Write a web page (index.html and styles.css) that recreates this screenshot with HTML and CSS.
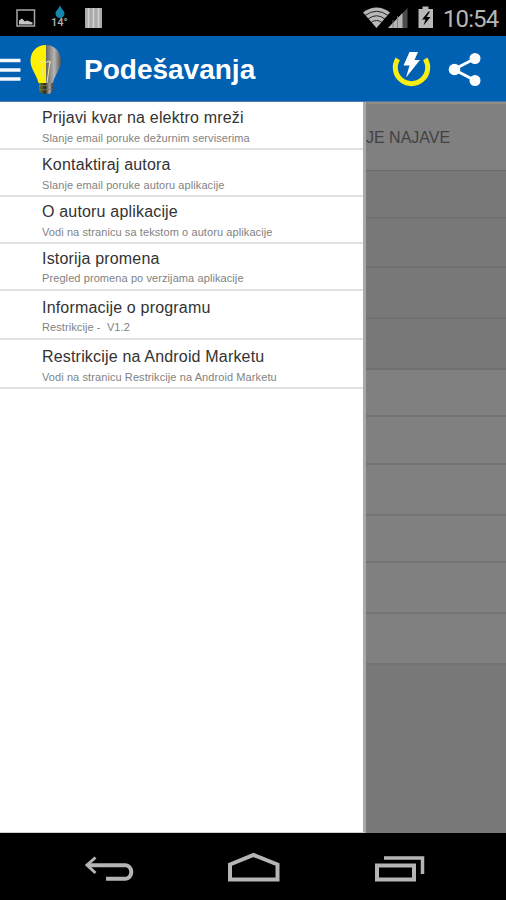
FILE: index.html
```html
<!DOCTYPE html>
<html lang="sr-Latn">
<head>
<meta charset="utf-8">
<meta name="viewport" content="width=device-width">
<title>Podešavanja</title>
<link rel="stylesheet" href="styles.css">
</head>
<body>
<div class="screen">
  <div class="status">
    <svg class="status-left" width="110" height="36" viewBox="0 0 110 36">
      <rect x="17" y="10" width="17.500" height="16" fill="none" stroke="#a8a8a8" stroke-width="1.500"/>
      <path d="M19 24.500v-4l3-2 3 3 2-1 5.500 2v2z" fill="#c4c4c4"/>
      <path d="M60 5c1 4 4.500 5.500 4.500 8.500a4.500 4.500 0 0 1-9 0c0-3 3.500-4.500 4.500-8.500z" fill="#1687ac"/>
      <rect x="85" y="8" width="17" height="20" fill="#ababab"/>
      <path d="M88.500 8v20M93.500 8v20M98.500 8v20" stroke="#d2d2d2" stroke-width="1.500"/>
    </svg>
    <span class="temp">14°</span>
    <svg class="status-right" width="76" height="36" viewBox="0 0 76 36">
      <path d="M0 12.500Q13.500 2.500 27 12.500L13.500 28z" fill="#b8b8b8"/>
      <path d="M2 15.500q11.500-8.500 23 0M5 19q8.500-6.500 17 0M8 22.500q5.500-4 11 0" fill="none" stroke="#222" stroke-width="1"/>
      <path d="M44.500 8v20H25z" fill="#4b4b4b"/>
      <path d="M39.500 13v15H25z" fill="#b5b5b5"/>
      <path d="M30 20v8M34.500 16v12" stroke="#777" stroke-width=".8"/>
      <path d="M55.500 9h4V6.500h6V9h4.500v19H55.500z" fill="#b8b8b8"/>
      <path d="M65.500 11.500l-6.500 8h3.500l-2 6 7-8.500h-4l3.500-5.500z" fill="#000"/>
    </svg>
    <span class="clock">10:54</span>
  </div>
  <div class="bar">
    <svg class="brand" width="66" height="66" viewBox="0 0 66 66">
      <defs>
        <linearGradient id="metal" x1="0" x2="1"><stop offset="0" stop-color="#666"/><stop offset=".55" stop-color="#b5b5b5"/><stop offset="1" stop-color="#555"/></linearGradient>
        <linearGradient id="base"><stop offset="0" stop-color="#7b7d1c"/><stop offset=".45" stop-color="#2c2c18"/><stop offset=".75" stop-color="#aaa"/><stop offset="1" stop-color="#333"/></linearGradient>
      </defs>
      <path d="M0 24.500h20.500M0 34h20.500M0 43h20.500" stroke="#f4f7fb" stroke-width="3.400"/>
      <path d="M46 9C36 9 30.500 16 30.500 25c0 8 6 13 8 22h7.500z" fill="#fff100"/>
      <path d="M46 9c9 0 15 7 15 16 0 8-6 13-8 22h-7z" fill="url(#metal)"/>
      <path d="M41 25l3 22M50 25l-3 22M40 25l2 2 2-2 2 2 2-2 3 2" fill="none" stroke="#e8e5a0" stroke-width="1"/>
      <path d="M39 47h14v7q-1 3-4 4h-5q-4-1-5-4z" fill="url(#base)"/>
      <path d="M39 50l14-1M39.500 54l13-1" stroke="#777" stroke-width=".8"/>
    </svg>
    <h1 class="heading">Podešavanja</h1>
    <svg class="actions" width="116" height="66" viewBox="0 0 116 66">
      <path d="M7.800 22.800A16.200 16.200 0 1 0 35.200 22.800" fill="none" stroke="#f6ee16" stroke-width="5"/>
      <path d="M19.500 16h8.500l-3.500 8h5.500L16 41.500l3.500-12h-6z" fill="#fff"/>
      <path d="M85 22.500L64 33.500l21 11" fill="none" stroke="#fff" stroke-width="3"/>
      <circle cx="85" cy="22.500" r="5.500" fill="#fff"/><circle cx="64.500" cy="33.500" r="5.800" fill="#fff"/><circle cx="85" cy="44.500" r="5.500" fill="#fff"/>
    </svg>
  </div>
  <div class="main">
    <ul class="drawer">
      <li class="item first"><div class="title">Prijavi kvar na elektro mreži</div><div class="sub">Slanje email poruke dežurnim serviserima</div></li>
      <li class="item"><div class="title">Kontaktiraj autora</div><div class="sub">Slanje email poruke autoru aplikacije</div></li>
      <li class="item"><div class="title">O autoru aplikacije</div><div class="sub">Vodi na stranicu sa tekstom o autoru aplikacije</div></li>
      <li class="item close"><div class="title">Istorija promena</div><div class="sub">Pregled promena po verzijama aplikacije</div></li>
      <li class="item tall close"><div class="title">Informacije o programu</div><div class="sub">Restrikcije -&nbsp; V1.2</div></li>
      <li class="item tall"><div class="title">Restrikcije na Android Marketu</div><div class="sub">Vodi na stranicu Restrikcije na Android Marketu</div></li>
    </ul>
    <div class="behind">
      <div class="tab">JE NAJAVE</div>
      <div class="row dark h48"></div>
      <div class="row dark h49"></div>
      <div class="row dark h51"></div>
      <div class="row dark h51"></div>
      <div class="row h47"></div>
      <div class="row h48"></div>
      <div class="row h51"></div>
      <div class="row h47"></div>
      <div class="row h51"></div>
      <div class="row h51"></div>
    </div>
  </div>
  <div class="nav">
    <svg width="506" height="67" viewBox="0 0 506 67" fill="none" stroke="#b5b5b5">
      <path d="M95.500 24.500L87 32l8.500 8" stroke-width="3"/>
      <path d="M88 32.200h37.500a5.800 6.800 0 0 1 0 13.600H106" stroke-width="4"/>
      <path d="M230 31.500l23.500-9.500 24 9.500V46.500H230z" stroke-width="4"/>
      <path d="M377 32.500h37v14h-37z" stroke-width="4"/>
      <path d="M384 25h38.500v16" stroke-width="3.500"/>
    </svg>
  </div>
</div>
</body>
</html>
```
FILE: styles.css
```css
* { box-sizing: border-box; }
body { margin: 0; background: #000; font-family: "Liberation Sans", Arial, sans-serif; }
.screen { width: 506px; height: 900px; display: flex; flex-direction: column; overflow: hidden; }
.status { height: 36px; flex: none; background: #000; display: flex; position: relative; color: #b5b5b5; }
.status-right { margin-left: 253px; }
.temp { position: absolute; left: 51px; top: 16px; font: 500 11px/14px Roboto, sans-serif; }
.clock { font: 24px/38px Roboto, sans-serif; margin-left: 4px; letter-spacing: -0.9px; }
.bar { height: 66px; flex: none; background: #0060b2; border-bottom: 1px solid #4d7ba9; display: flex; align-items: flex-start; }
.heading { margin: 0 0 0 18px; width: 306px; font-size: 28px; line-height: 68px; font-weight: 700; color: #fff; white-space: nowrap; }
.main { height: 731px; flex: none; display: flex; }
.drawer { list-style: none; margin: 0; padding: 0; width: 366px; background: #fff; border-right: 3px solid #a8a8a8; border-bottom: 1px solid #d0d0d0; }
.item { height: 47px; padding: 5px 0 0 42px; border-bottom: 2px solid #e1e1e1; white-space: nowrap; }
.first { height: 48px; padding-top: 6px; }
.tall { height: 49px; padding-top: 7px; }
.title { font-size: 16px; letter-spacing: 0.18px; line-height: 20px; color: #333; }
.sub { font-size: 11px; letter-spacing: 0.09px; line-height: 16px; margin-top: 2px; color: #828282; }
.close .sub { margin-top: 1px; }
.behind { flex: 1; background: #787878; border-top: 2px solid #8d8d86; }
.tab { height: 67px; background: #808080; border-bottom: 1px solid #6b6b6b; font-size: 16px; line-height: 67px; color: #424242; white-space: nowrap; }
.row { background: #808080; border-bottom: 2px solid #747474; }
.dark { background: #787878; border-color: #707070; }
.h47 { height: 47px; }
.h48 { height: 48px; }
.h49 { height: 49px; }
.h51 { height: 51px; }
.nav { height: 67px; flex: none; background: #000; }
```
